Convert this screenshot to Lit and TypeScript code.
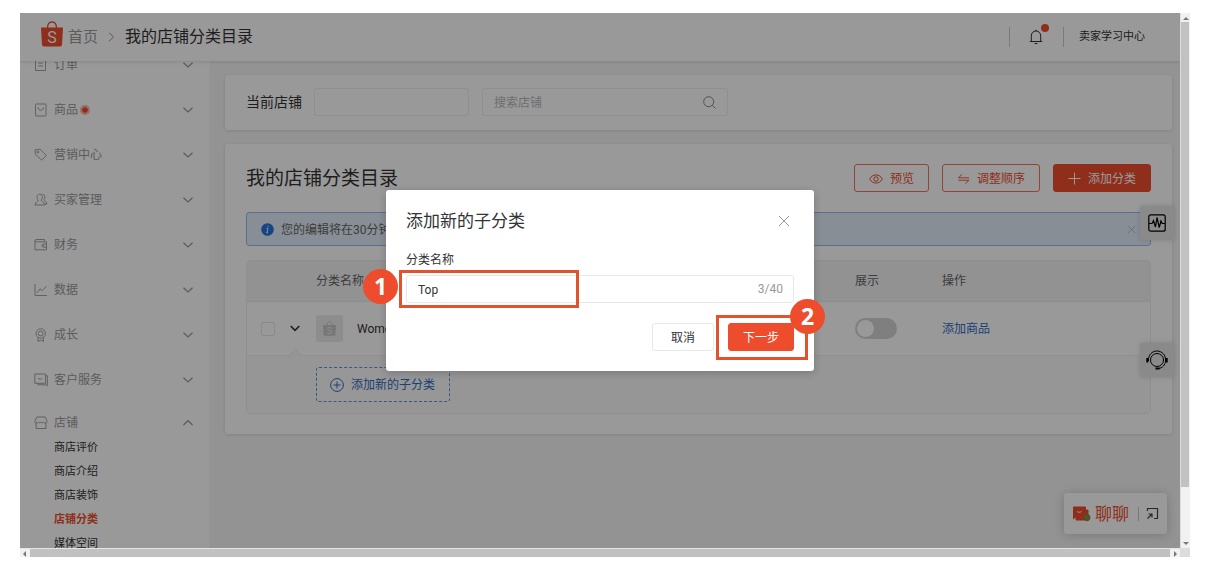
import { LitElement, html, css, svg, TemplateResult } from "lit";
import { customElement, state } from "lit/decorators.js";
import { classMap } from "lit/directives/class-map.js";

type Section = { label: string; icon: string; dot?: boolean; open?: boolean; children?: string[] };

const SECTIONS: Section[] = [
  { label: "订单", icon: "order" },
  { label: "商品", icon: "product", dot: true },
  { label: "营销中心", icon: "tag" },
  { label: "买家管理", icon: "users" },
  { label: "财务", icon: "wallet" },
  { label: "数据", icon: "chart" },
  { label: "成长", icon: "medal" },
  { label: "客户服务", icon: "service" },
  {
    label: "店铺",
    icon: "shop",
    open: true,
    children: ["商店评价", "商店介绍", "商店装饰", "店铺分类", "媒体空间"],
  },
];

const GLYPHS: Record<string, TemplateResult> = {
  order: svg`<path d="M1.5 1.5h10v11h-10zM4 5h5M4 8h5"/>`,
  product: svg`<rect x="1.5" y="1" width="10.5" height="12" rx=".6"/><path d="M4.2 5c.4 3 4.7 3 5.2 0M3.6 5h1.2M8.8 5h1.2"/>`,
  tag: svg`<path d="M1 1.8l5-.6 6.3 6.2-4.7 4.8L1.4 6.3z"/><circle cx="3.9" cy="4" r="1"/>`,
  users: svg`<path d="M5.6 1.2c2 0 2.9 1.4 2.7 3.2-.1 1.300-.6 2.200-1.200 2.800.1 1.300 3.200 1.500 3.700 4.800H1c.3-3.300 3.300-3.500 3.300-4.800C3.300 6.500 3 5.600 3 4.400c0-1.800.8-3.200 2.600-3.200zM8.300 1.300c2 .1 2.700 1.500 2.500 3-.1 1.200-.5 2-.9 2.500.2 1.100 2.600 1.500 3.100 4.200h-2"/>`,
  wallet: svg`<path d="M1 2.500v9.300h11.500v-8H1.800C.8 3.600.8 1.500 2 1.500h8.500v2M12.500 6H9.300c-2 0-2 3.200 0 3.200h3.200"/><circle cx="9.500" cy="7.600" r=".4"/>`,
  chart: svg`<path d="M1 1v11.500h12M3 10l3-4.200 2.200 2 4.300-4.600"/>`,
  medal: svg`<circle cx="6.700" cy="5.500" r="4.700"/><circle cx="6.700" cy="5.500" r="2.400"/><path d="M4 9.600v3.800l2.700-1.300 2.700 1.300V9.600"/>`,
  service: svg`<path d="M.8 1h10.800v9.300H.8zM4 5.200c1 1.200 3.400 1.200 4.400 0M11.800 2.800h1.500v10l-1.500-1H4V10.500"/>`,
  shop: svg`<path d="M2.800 1h8.400l1.900 4.500c0 1-.5 1.500-1.200 1.500v5.500H2.100V7C1.400 7 .9 6.500.9 5.500zM2.100 7c1 0 1.600-.3 2-1 .6 1.100 2 1.100 2.900 0 .8 1.100 2.200 1.100 2.900 0 .4.700 1 1 2 1"/>`,
};

const close = svg`<path d="M1 1l10 10M11 1L1 11"/>`;

@customElement("app-root")
export class AppRoot extends LitElement {
  @state() private name = "Top";

  static styles = css`
    :host {
      display: block;
      box-sizing: border-box;
      height: 100vh;
      padding: 13px 20px 19px;
      overflow: hidden;
      background: #fff;
      color: #333;
      font: 12px/16px Roboto, "Noto Sans CJK SC", sans-serif;
    }
    * { box-sizing: border-box; }
    button, input { font: inherit; color: inherit; margin: 0; }
    button { cursor: pointer; white-space: nowrap; }
    a { color: inherit; text-decoration: none; }
    h1, h2, ul { margin: 0; padding: 0; font-weight: 400; list-style: none; }
    svg { display: block; flex: none; fill: none; stroke: currentColor; }

    .frame {
      display: grid;
      grid-template: minmax(0, 1fr) 9px / minmax(0, 1fr) 10px;
      height: 100%;
    }
    .screen {
      position: relative;
      display: grid;
      grid-template-rows: 48px minmax(0, 1fr);
      overflow: hidden;
      background: #f6f6f6;
    }
    .bar-v, .bar-h { display: flex; background: #f1f1f1; color: #777; }
    .bar-v { flex-direction: column; border-left: 1px solid #ddd; }
    .bar-h { border-top: 1px solid #e4e4e4; }
    .thumb { background: #c1c1c1; }
    .bar-v .thumb { flex: 0 0 87%; margin-right: 1px; }
    .bar-h .thumb { flex: 1; }
    .arrow { display: grid; place-items: center; width: 10px; height: 9px; }
    .arrow svg { fill: currentColor; stroke: none; }
    .push { margin-top: auto; }
    .corner { background: #dcdcdc; }

    .top {
      z-index: 1;
      display: flex;
      align-items: center;
      padding: 0 35px 0 21px;
      background: #fff;
      box-shadow: 0 1px 4px rgba(0, 0, 0, 0.12);
    }
    .logo { margin-top: -6px; }
    .logo text { fill: #fff; stroke: none; font-size: 16px; }
    .home { margin-left: 5px; color: #999; font-size: 15px; line-height: 20px; }
    .crumb { margin: 0 10px; color: #999; }
    .here { flex: 1; font-size: 16px; line-height: 20px; }
    .rule { width: 1px; height: 20px; background: #ccc; }
    .bell { position: relative; margin: 0 20px 0 19px; padding: 0; border: 0; background: none; }
    .bell-dot {
      position: absolute;
      top: -5px;
      right: -6px;
      width: 8px;
      height: 8px;
      border-radius: 50%;
      background: #ee4d2d;
    }
    .learn { margin-left: 15px; font-size: 11px; }

    .body { display: grid; grid-template-columns: 189px minmax(0, 1fr); min-height: 0; }
    .side { overflow: hidden; background: #fff; }
    .menu { margin-top: -19px; }
    .item {
      display: flex;
      align-items: center;
      width: 100%;
      height: 45px;
      padding: 0 15px 0 14px;
      border: 0;
      background: none;
      color: #999;
      text-align: left;
    }
    .item.open { height: 33px; padding-top: 8px; }
    .item svg:first-child { margin-right: 6px; }
    .item .caret { margin-left: auto; }
    .dot {
      width: 10px;
      height: 10px;
      margin-left: 2px;
      border: 2px solid #f9b9ab;
      border-radius: 50%;
      background: #ee4d2d;
      background-clip: padding-box;
    }
    .sub { padding-top: 1px; }
    .sub a { display: block; padding-left: 34px; font-size: 11px; line-height: 24px; }
    .sub .current { color: #ee4d2d; font-weight: 700; }

    .main { display: flex; flex-direction: column; gap: 14px; padding: 14px 8px 0 16px; }
    .card { border-radius: 3px; background: #fff; box-shadow: 0 1px 4px rgba(0, 0, 0, 0.12); }
    .filter { display: flex; align-items: center; padding: 13px 21px 14px; }
    .filter label { margin-right: 12px; font-size: 14px; line-height: 20px; }
    .box {
      display: flex;
      align-items: center;
      height: 28px;
      border: 1px solid #e8e8e8;
      border-radius: 3px;
      background: #fff;
    }
    .box input {
      flex: 1;
      min-width: 0;
      height: 100%;
      padding: 2px 11px 0;
      border: 0;
      outline: 0;
      background: none;
    }
    .box input::placeholder { color: #b8b8b8; opacity: 1; }
    .store { width: 155px; margin-right: 13px; }
    .find { width: 246px; padding-right: 11px; color: #888; }
    .filter .box { border-color: #eee; }

    .panel { padding: 20px 21px 20px 21px; }
    .head { display: flex; align-items: center; gap: 13px; }
    .head h1 { flex: 1; padding-top: 1px; font-size: 19px; line-height: 27px; }
    .btn {
      display: flex;
      align-items: center;
      justify-content: center;
      gap: 7px;
      height: 28px;
      padding: 1px 14px 0;
      border: 1px solid #e8e8e8;
      border-radius: 3px;
      background: #fff;
    }
    .outline { border-color: #f0745b; color: #ee4d2d; }
    .outline.wide { padding: 1px 14px 0; }
    .solid { border-color: #ee4d2d; background: #ee4d2d; color: #fff; }
    .notice {
      display: flex;
      align-items: center;
      height: 34px;
      margin-top: 20px;
      padding: 0 14px;
      border: 1px solid #97bbea;
      border-radius: 3px;
      background: #e3edf9;
      color: #666;
    }
    .notice span { flex: 1; margin-left: 7px; padding-top: 1px; }
    .notice svg:last-child { color: #aaa; }
    .info { fill: #2673dd; stroke: none; }

    .grid {
      width: 100%;
      margin-top: 14px;
      border: 1px solid #efefef;
      border-radius: 4px;
      border-spacing: 0;
      table-layout: fixed;
    }
    .grid th, .grid td { padding: 0; text-align: left; font-weight: 400; }
    .grid th { height: 41px; border-bottom: 1px solid #ebebeb; background: #f4f4f4; color: #666; }
    .grid td { height: 54px; border-bottom: 1px solid #f1f1f1; }
    .grid .c-pick { width: 69px; }
    .grid .c-show { width: 87px; }
    .grid .c-act { width: 208px; }
    .pick { position: relative; display: flex; align-items: center; gap: 15px; padding-left: 14px; }
    .tick {
      appearance: none;
      width: 14px;
      height: 14px;
      border: 1px solid #e6e6e6;
      border-radius: 2px;
      background: #fff;
    }
    .notch { position: absolute; left: 42px; bottom: -20px; fill: #fafafa; color: #ececec; }
    .goods { display: flex; align-items: center; gap: 14px; }
    .thumbnail {
      display: grid;
      place-items: center;
      width: 27px;
      height: 27px;
      border-radius: 2px;
      background: #ebebeb;
      color: #c6c6c6;
    }
    .thumbnail text { fill: #ebebeb; stroke: none; font-size: 9px; }
    .switch {
      appearance: none;
      display: block;
      width: 42px;
      height: 21px;
      padding: 2px;
      border-radius: 11px;
      background: #d4d4d4;
    }
    .switch::before {
      content: "";
      display: block;
      width: 17px;
      height: 17px;
      border-radius: 50%;
      background: #fff;
    }
    .link { color: #2f6ac2; }
    .grid .nested { height: 57px; border: 0; background: #fafafa; }
    .add-sub {
      display: flex;
      align-items: center;
      gap: 7px;
      height: 35px;
      padding: 0 14px 0 13px;
      border: 1px dashed #5f92d8;
      border-radius: 3px;
      background: #fcfcfc;
      color: #2f6ac2;
    }

    .float {
      position: absolute;
      right: 6px;
      display: grid;
      place-items: center;
      width: 34px;
      height: 34px;
      padding: 0;
      border: 0;
      border-radius: 3px 0 0 3px;
      background: #e6e6e6;
      box-shadow: 0 0 5px rgba(0, 0, 0, 0.15);
      color: #000;
    }
    .pulse { top: 193px; }
    .help { top: 330px; }
    .chat {
      position: absolute;
      right: 13px;
      bottom: 14px;
      display: flex;
      align-items: center;
      height: 41px;
      padding: 0 8px 0 9px;
      border: 0;
      border-radius: 3px;
      background: #fff;
      box-shadow: 0 1px 12px rgba(0, 0, 0, 0.2);
      color: #ee4d2d;
      font-size: 17px;
      line-height: 24px;
    }
    .chat span { margin: 0 9px 0 4px; }
    .chat .rule { height: 14px; margin-right: 7px; }
    .chat svg:last-child { color: #444; }

    .mask {
      position: absolute;
      inset: 0;
      z-index: 2;
      display: flex;
      align-items: center;
      justify-content: center;
      background: rgba(0, 0, 0, 0.4);
    }
    .dialog {
      width: 428px;
      padding: 20px;
      border-radius: 3px;
      background: #fff;
      box-shadow: 0 2px 8px rgba(0, 0, 0, 0.2);
    }
    .dialog-head { display: flex; align-items: center; justify-content: space-between; }
    .dialog-head h2 { font-size: 17px; line-height: 22px; }
    .plain { padding: 4px; border: 0; background: none; color: #999; }
    .dialog label { display: block; margin: 20px 0 7px; }
    .field { position: relative; }
    .field .count { padding-right: 10px; color: #999; }
    .actions { display: flex; justify-content: flex-end; gap: 14px; margin-top: 20px; }
    .actions .btn { padding: 1px 18px 0; }
    .actions .solid { padding: 1px 14px 0; }
    .next { position: relative; }
    .mark { position: absolute; border: 3px solid #e0532f; pointer-events: none; }
    .field .mark { left: -8px; top: -6px; width: 180px; height: 38px; }
    .next .mark { left: -12px; top: -8px; right: -14px; bottom: -9px; }
    .step {
      position: absolute;
      display: grid;
      place-items: center;
      width: 35px;
      height: 35px;
      border-radius: 50%;
      background: #ee4d2d;
      color: #fff;
      font: 700 23px/35px "Open Sans", "Noto Sans", sans-serif;
      pointer-events: none;
    }
    .field .step { left: -44px; top: -7px; }
    .next .step { right: -31px; top: -24px; }
  `;

  private caret(open = false) {
    return html`<svg class="caret" width="12" height="8" viewBox="0 0 12 8" stroke-width="1.2">
      <path d=${open ? "M1.500 6L6 1.700 10.500 6" : "M1.500 1.700L6 6l4.500-4.300"} />
    </svg>`;
  }

  private section(s: Section) {
    return html`<li>
      <button class=${classMap({ item: true, open: !!s.open })} aria-expanded=${s.open ? "true" : "false"}>
        <svg width="14" height="14" viewBox="0 0 14 14" stroke-width=".9">${GLYPHS[s.icon]}</svg>
        ${s.label}${s.dot ? html`<span class="dot"></span>` : ""}${this.caret(s.open)}
      </button>
      ${s.children
        ? html`<ul class="sub">
            ${s.children.map(
              (c) => html`<li><a href="#" class=${classMap({ current: c === "店铺分类" })}>${c}</a></li>`
            )}
          </ul>`
        : ""}
    </li>`;
  }

  private header() {
    return html`<header class="top">
      <svg class="logo" width="22" height="26" viewBox="0 0 22 26">
        <path d="M0 6.500h22l-1 17q-.1 2-2 2H3q-1.900 0-2-2z" fill="#ee4d2d" stroke="none" />
        <path d="M6.500 7C6.500 3 8.300 1 11 1s4.500 2 4.500 6" stroke="#ee4d2d" stroke-width="1.300" />
        <text x="11" y="21.500" text-anchor="middle">S</text>
      </svg>
      <a class="home" href="#">首页</a>
      <svg class="crumb" width="7" height="10" viewBox="0 0 7 10"><path d="M1 .8L5.500 5 1 9.200" /></svg>
      <span class="here">我的店铺分类目录</span>
      <span class="rule"></span>
      <button class="bell" aria-label="通知">
        <svg width="14" height="16" viewBox="0 0 14 16">
          <path d="M.8 12.500h12.400M2.300 12.300V7C2.300 4 4.200 2 7 2s4.700 2 4.700 5v5.300M7 .7V2M5.600 14.500h2.800" />
        </svg>
        <span class="bell-dot"></span>
      </button>
      <span class="rule"></span>
      <a class="learn" href="#">卖家学习中心</a>
    </header>`;
  }

  private categories() {
    return html`<section class="card panel">
      <div class="head">
        <h1>我的店铺分类目录</h1>
        <button class="btn outline">
          <svg width="14" height="10" viewBox="0 0 14 10">
            <path d="M.6 5C3.500-.4 10.500-.4 13.400 5 10.500 10.400 3.500 10.400.6 5z" /><circle cx="7" cy="5" r="2.200" />
          </svg>
          预览
        </button>
        <button class="btn outline wide">
          <svg width="13" height="12" viewBox="0 0 14 12"><path d="M5.500 1L1.500 4.700H13M1.500 7.300H13L9 11" /></svg>
          调整顺序
        </button>
        <button class="btn solid">
          <svg width="13" height="13" viewBox="0 0 13 13"><path d="M6.500.5v12M.5 6.500h12" /></svg>
          添加分类
        </button>
      </div>
      <div class="notice">
        <svg class="info" width="13" height="13" viewBox="0 0 13 13">
          <circle cx="6.500" cy="6.500" r="6.300" />
          <path d="M7 5.300L6 9.700M5.500 5.300H7M5.300 9.700h1.700M7.200 2.800v1.200" stroke="#e3effe" />
        </svg>
        <span>您的编辑将在30分钟</span>
        <svg width="9" height="9" viewBox="0 0 12 12">${close}</svg>
      </div>
      <table class="grid">
        <thead>
          <tr>
            <th class="c-pick"></th>
            <th>分类名称</th>
            <th class="c-show">展示</th>
            <th class="c-act">操作</th>
          </tr>
        </thead>
        <tbody>
          <tr>
            <td>
              <div class="pick">
                <input class="tick" type="checkbox" aria-label="选择" />
                <svg width="10" height="7" viewBox="0 0 10 7" stroke-width="1.600"><path d="M.7 1L5 5.300 9.300 1" /></svg>
                <svg class="notch" width="13" height="7" viewBox="0 0 13 7"><path d="M0 6.500h.5l6-6 6 6h.5" /></svg>
              </div>
            </td>
            <td>
              <div class="goods">
                <span class="thumbnail">
                  <svg width="13" height="15" viewBox="0 0 13 15">
                    <path d="M0 4h13l-.6 9.500q-.1 1.300-1.200 1.300H1.800q-1.100 0-1.200-1.300z" fill="currentColor" stroke="none" />
                    <path d="M4 4C4 2 5 .7 6.500.7S9 2 9 4" />
                    <text x="6.500" y="12.700" text-anchor="middle">S</text>
                  </svg>
                </span>
                Women
              </div>
            </td>
            <td><input class="switch" type="checkbox" role="switch" aria-label="展示" /></td>
            <td><a class="link" href="#">添加商品</a></td>
          </tr>
          <tr>
            <td class="nested"></td>
            <td class="nested" colspan="3">
              <button class="add-sub">
                <svg width="14" height="14" viewBox="0 0 14 14">
                  <circle cx="7" cy="7" r="6.400" /><path d="M7 3.500v7M3.500 7h7" />
                </svg>
                添加新的子分类
              </button>
            </td>
          </tr>
        </tbody>
      </table>
    </section>`;
  }

  private dialog() {
    return html`<div class="mask">
      <div class="dialog" role="dialog" aria-modal="true" aria-labelledby="dialog-title">
        <div class="dialog-head">
          <h2 id="dialog-title">添加新的子分类</h2>
          <button class="plain" aria-label="关闭">
            <svg width="12" height="12" viewBox="0 0 12 12">${close}</svg>
          </button>
        </div>
        <label for="category">分类名称</label>
        <div class="box field">
          <input
            id="category"
            maxlength="40"
            .value=${this.name}
            @input=${(e: Event) => (this.name = (e.target as HTMLInputElement).value)}
          />
          <span class="count">${this.name.length}/40</span>
          <span class="mark"></span>
          <span class="step">1</span>
        </div>
        <div class="actions">
          <button class="btn">取消</button>
          <div class="next">
            <button class="btn solid">下一步</button>
            <span class="mark"></span>
            <span class="step">2</span>
          </div>
        </div>
      </div>
    </div>`;
  }

  private arrow(d: string, push = false) {
    return html`<span class=${classMap({ arrow: true, push })}>
      <svg width="6" height="6" viewBox="0 0 6 6"><path d=${d} /></svg>
    </span>`;
  }

  render() {
    return html`<div class="frame">
      <div class="screen">
        ${this.header()}
        <div class="body">
          <nav class="side"><ul class="menu">${SECTIONS.map((s) => this.section(s))}</ul></nav>
          <main class="main">
            <section class="card filter">
              <label for="store">当前店铺</label>
              <div class="box store"><input id="store" /></div>
              <div class="box find">
                <input type="text" placeholder="搜索店铺" aria-label="搜索店铺" />
                <svg width="13" height="13" viewBox="0 0 13 13"><circle cx="5.700" cy="5.700" r="5" /><path d="M9.300 9.300l3.200 3.200" /></svg>
              </div>
            </section>
            ${this.categories()}
          </main>
        </div>
        <button class="float pulse" aria-label="诊断">
          <svg width="18" height="18" viewBox="0 0 18 18" stroke-width="1.200">
            <rect x=".8" y=".8" width="16.400" height="16.400" rx="2" />
            <path d="M1 9.500h3l1.500-3 2 6.500L9 3.500l2.200 10L13 7l1.200 2.500H17" />
          </svg>
        </button>
        <button class="float help" aria-label="客服">
          <svg width="22" height="20" viewBox="0 0 22 20">
            <circle cx="11" cy="10" r="6.500" />
            <path d="M2.500 11C2 5 6 1 11 1s9 4 8.500 10c-.3 4-3 7-7 7.500" />
            <path d="M1.300 8v4.500M20.700 8v4.500M9.500 18.500h4" stroke-width="2" />
          </svg>
        </button>
        <button class="chat">
          <svg width="18" height="16" viewBox="0 0 18 16" stroke="none">
            <path d="M0 1h12.500v10.500H2L0 13z" fill="#ee4d2d" />
            <path d="M13.500 4H15v11l-1.500-1H3v-1.500h10.500z" fill="#ee4d2d" />
            <path d="M4 5.500c1 1 3.500 1 4.500 0" stroke="#fff" />
            <circle cx="14" cy="11.500" r="3" fill="#30b566" />
          </svg>
          <span>聊聊</span>
          <i class="rule"></i>
          <svg width="13" height="13" viewBox="0 0 13 13" stroke-width="1.200">
            <path d="M1.500 4V1.500h10v10H8M1.500 11.500L5.500 7.500M2.500 7h3.500v3.500" />
          </svg>
        </button>
        ${this.dialog()}
      </div>
      <div class="bar-v">
        ${this.arrow("M0 5l3-3 3 3z")}<span class="thumb"></span>${this.arrow("M0 1l3 3 3-3z", true)}
      </div>
      <div class="bar-h">
        ${this.arrow("M4 0L1 3l3 3z")}<span class="thumb"></span>${this.arrow("M2 0l3 3-3 3z")}
      </div>
      <div class="corner"></div>
    </div>`;
  }
}
